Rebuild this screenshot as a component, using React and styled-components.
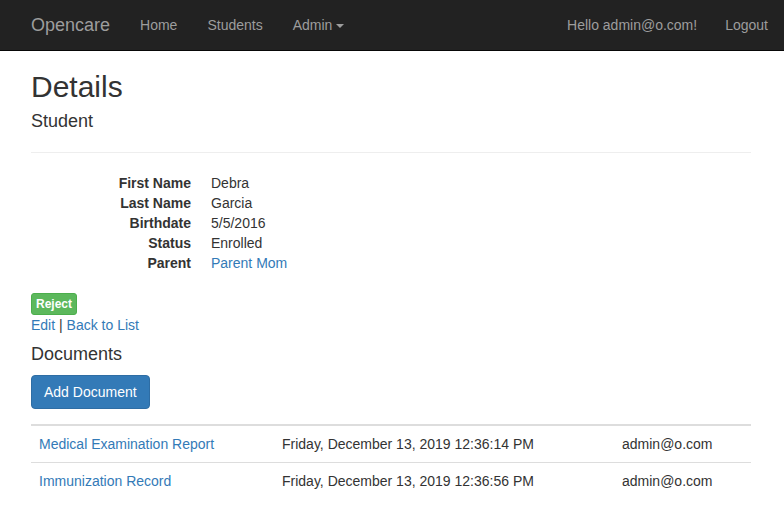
import styled, { createGlobalStyle } from "styled-components"

const GlobalStyle = createGlobalStyle`
  * { box-sizing: border-box; }
  body {
    margin: 0;
    padding-top: 50px;
    font-family: "Liberation Sans", Arial, Helvetica, sans-serif;
    font-size: 14px;
    line-height: 1.42857143;
    color: #333;
    background: #fff;
  }
`

const Navbar = styled.nav`
  position: fixed;
  top: 0;
  left: 0;
  right: 0;
  height: 51px;
  background: #222;
  border-bottom: 1px solid #080808;
`

const NavContainer = styled.div`
  width: 750px;
  margin: 0 auto;
  padding: 0 16px 0 14px;
  display: flex;
  align-items: center;
  height: 50px;
`

const Brand = styled.a`
  margin-left: -15px;
  padding: 15px;
  font-size: 18px;
  line-height: 20px;
  color: #9d9d9d;
  text-decoration: none;
`

const NavList = styled.ul`
  display: flex;
  list-style: none;
  margin: 0;
  padding: 0;
  margin-right: ${p => (p.$right ? "-30px" : "0")};
  margin-left: ${p => (p.$right ? "auto" : "0")};
  align-items: center;
`

const NavLink = styled.a`
  display: block;
  padding: 15px;
  line-height: 20px;
  color: #9d9d9d;
  text-decoration: none;
`

const NavButton = styled.button`
  background: none;
  border: 1px solid transparent;
  padding: 6px 12px;
  font: inherit;
  line-height: 20px;
  color: #9d9d9d;
  cursor: pointer;
`

const Caret = styled.span`
  display: inline-block;
  width: 0;
  height: 0;
  margin-left: 4px;
  vertical-align: middle;
  border-top: 4px solid;
  border-left: 4px solid transparent;
  border-right: 4px solid transparent;
`

const Container = styled.div`
  width: 750px;
  margin: 0 auto;
  padding: 0 16px 0 14px;
`

const Title = styled.h2`
  font-size: 30px;
  font-weight: 500;
  line-height: 1.1;
  margin: 20px 0 9px;
`

const SubTitle = styled.h4`
  font-size: 18px;
  font-weight: 500;
  line-height: 1.1;
  margin: 9px 0 10px;
`

const Rule = styled.hr`
  margin: 20px 0;
  border: 0;
  border-top: 1px solid #eee;
`

const DetailList = styled.dl`
  display: grid;
  grid-template-columns: 160px 1fr;
  column-gap: 20px;
  margin: 0 0 20px;
`

const Term = styled.dt`
  font-weight: 700;
  text-align: right;
  line-height: 20px;
`

const Value = styled.dd`
  margin: 0;
  line-height: 20px;
`

const Link = styled.a`
  color: #337ab7;
  text-decoration: none;
`

const Button = styled.button`
  display: inline-block;
  font-family: inherit;
  color: #fff;
  cursor: pointer;
  border: 1px solid ${p => (p.$variant === "success" ? "#4cae4c" : "#2e6da4")};
  background: ${p => (p.$variant === "success" ? "#5cb85c" : "#337ab7")};
  font-size: ${p => (p.$small ? "12px" : "14px")};
  font-weight: ${p => (p.$small ? 700 : 400)};
  line-height: ${p => (p.$small ? "18px" : "20px")};
  padding: ${p => (p.$small ? "1px 4px" : "6px 12px")};
  border-radius: ${p => (p.$small ? "3px" : "4px")};
  vertical-align: top;
`

const ActionForm = styled.form`
  margin: 0;
  height: 22px;
`

const LinkLine = styled.p`
  margin: 0 0 10px;
`

const Table = styled.table`
  width: 100%;
  margin-top: 0;
  border-collapse: collapse;
  border-spacing: 0;

  th {
    height: 16px;
    padding: 0;
    border-bottom: 2px solid #ddd;
  }

  td {
    padding: 8px;
    line-height: 20px;
    border-top: 1px solid #ddd;
    vertical-align: top;
  }
`

const documents = [
  { name: "Medical Examination Report", date: "Friday, December 13, 2019 12:36:14 PM", by: "admin@o.com" },
  { name: "Immunization Record", date: "Friday, December 13, 2019 12:36:56 PM", by: "admin@o.com" },
]

const details = [
  ["First Name", "Debra"],
  ["Last Name", "Garcia"],
  ["Birthdate", "5/5/2016"],
  ["Status", "Enrolled"],
]

export default function App() {
  return (
    <>
      <GlobalStyle />
      <Navbar>
        <NavContainer>
          <Brand href="#">Opencare</Brand>
          <NavList>
            <li><NavLink href="#">Home</NavLink></li>
            <li><NavLink href="#">Students</NavLink></li>
            <li><NavLink href="#">Admin<Caret /></NavLink></li>
          </NavList>
          <NavList $right>
            <li><NavLink href="#">Hello admin@o.com!</NavLink></li>
            <li><NavButton type="button">Logout</NavButton></li>
          </NavList>
        </NavContainer>
      </Navbar>

      <Container>
        <Title>Details</Title>
        <SubTitle>Student</SubTitle>
        <Rule />
        <DetailList>
          {details.map(([label, value]) => [
            <Term key={label + "-t"}>{label}</Term>,
            <Value key={label + "-v"}>{value}</Value>,
          ])}
          <Term>Parent</Term>
          <Value><Link href="#">Parent Mom</Link></Value>
        </DetailList>

        <ActionForm>
          <Button type="button" $variant="success" $small>Reject</Button>
        </ActionForm>
        <LinkLine>
          <Link href="#">Edit</Link> | <Link href="#">Back to List</Link>
        </LinkLine>

        <SubTitle>Documents</SubTitle>
        <Button type="button" $variant="primary">Add Document</Button>

        <Table>
          <thead>
            <tr><th style={{ width: 243 }} /><th style={{ width: 340 }} /><th /></tr>
          </thead>
          <tbody>
            {documents.map(doc => (
              <tr key={doc.name}>
                <td><Link href="#">{doc.name}</Link></td>
                <td>{doc.date}</td>
                <td>{doc.by}</td>
              </tr>
            ))}
          </tbody>
        </Table>
      </Container>
    </>
  )
}
